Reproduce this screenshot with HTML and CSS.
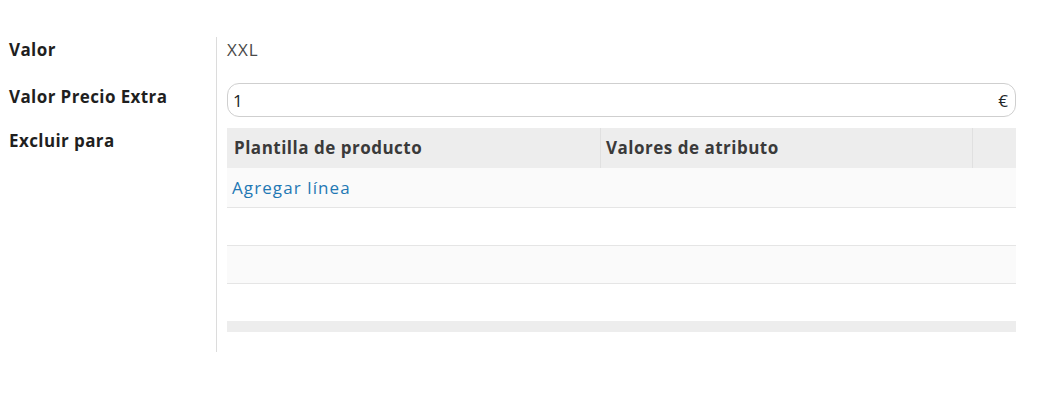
FILE: index.html
```html
<!DOCTYPE html>
<html lang="es">
<head>
<meta charset="utf-8">
<link rel="stylesheet" href="styles.css">
</head>
<body>
<div class="form">
  <div class="label l1">Valor</div>
  <div class="value v1">XXL</div>

  <div class="label l2">Valor Precio Extra</div>
  <div class="value v2">
    <div class="input">
      <span class="num">1</span>
      <span class="cur">€</span>
    </div>
  </div>

  <div class="label l3">Excluir para</div>
  <div class="value v3">
    <div class="table">
      <div class="thead">
        <div class="th c1">Plantilla de producto</div>
        <div class="th c2">Valores de atributo</div>
        <div class="th c3"></div>
      </div>
      <div class="tr odd"><span class="link">Agregar línea</span></div>
      <div class="tr"></div>
      <div class="tr odd"></div>
      <div class="tr last"></div>
      <div class="tfoot"></div>
    </div>
  </div>
</div>
</body>
</html>
```
FILE: styles.css
```css
html, body {
  margin: 0;
  padding: 0;
  background: #ffffff;
}
body {
  font-family: "Open Sans", "Noto Sans", sans-serif;
  font-size: 17px;
  letter-spacing: 1.1px;
  color: #212529;
  padding-top: 37px;
}
.form {
  display: grid;
  grid-template-columns: 216px 1fr;
  width: 1016px;
}
.label {
  padding-left: 9px;
  font-weight: 700;
  letter-spacing: 0.4px;
  line-height: 24px;
  color: #1f1f1f;
}
.l1 { padding-top: 1px; }
.l2 { padding-top: 2px; }
.l3 { padding-top: 1px; }
.value {
  border-left: 1px solid #dcdcdc;
  padding-left: 10px;
}
.v1 {
  padding-top: 1px;
  padding-bottom: 21px;
  line-height: 24px;
  color: #4a4a4a;
}
.v2 {
  padding-bottom: 11px;
}
.v3 {
  padding-bottom: 20px;
}
.input {
  height: 34px;
  box-sizing: border-box;
  border: 1px solid #cfcfcf;
  border-radius: 12px;
  display: flex;
  align-items: center;
  justify-content: space-between;
  padding: 0 6px 0 5px;
  color: #212529;
}
.table {
  display: flex;
  flex-direction: column;
}
.thead {
  display: grid;
  grid-template-columns: 373px 372px 1fr;
  height: 40px;
  background: #ededed;
  font-weight: 700;
  letter-spacing: 0.5px;
  color: #3a3a3a;
}
.th {
  display: flex;
  align-items: center;
  padding-left: 7px;
  padding-bottom: 1px;
}
.c2, .c3 {
  border-left: 1px solid #e0e0e0;
  padding-left: 5px;
}
.tr {
  height: 37px;
  border-bottom: 1px solid #e5e5e5;
  background: #ffffff;
  display: flex;
  align-items: center;
  padding-left: 5px;
}
.tr.odd {
  background: #fafafa;
}
.thead + .tr {
  height: 39px;
}
.tr.last {
  border-bottom: none;
}
.link {
  color: #1f78b4;
}
.tfoot {
  height: 11px;
  background: #ededed;
}
```
